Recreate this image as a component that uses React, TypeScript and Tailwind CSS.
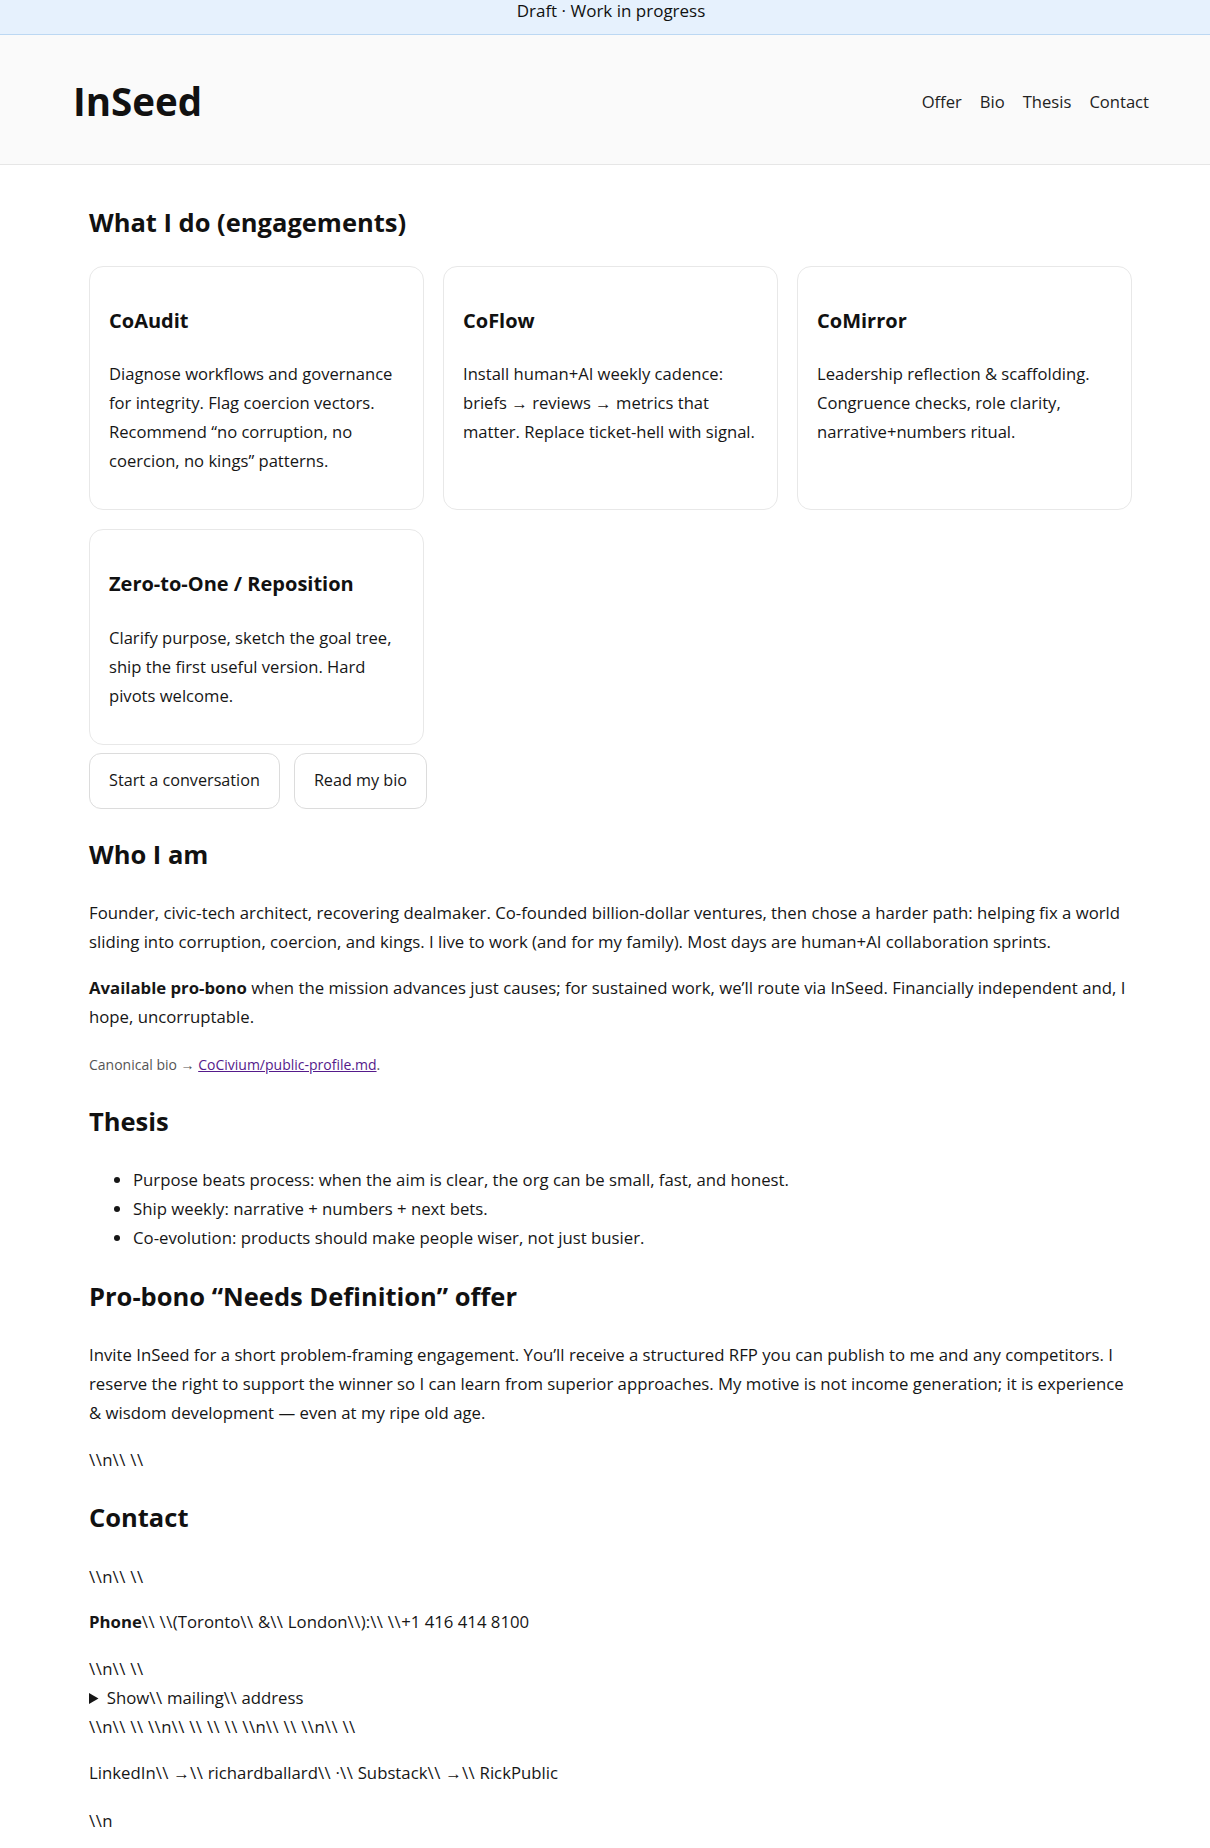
import React from "react";

const BS = "\\\\"; // renders as \\

function Bs({ text }: { text: string }) {
  const out: React.ReactNode[] = [];
  let buf = "";
  let k = 0;
  const flush = () => {
    if (buf) {
      out.push(<React.Fragment key={`t${k++}`}>{buf}</React.Fragment>);
      buf = "";
    }
  };
  for (const ch of text) {
    if (ch === "\\") {
      flush();
      out.push(
        <span key={`b${k++}`} className="tracking-[0.5px]">
          {"\\"}
        </span>
      );
    } else {
      buf += ch;
    }
  }
  flush();
  return <>{out}</>;
}

const cards = [
  {
    title: "CoAudit",
    text: "Diagnose workflows and governance for integrity. Flag coercion vectors. Recommend “no corruption, no coercion, no kings” patterns.",
  },
  {
    title: "CoFlow",
    text: "Install human+AI weekly cadence: briefs → reviews → metrics that matter. Replace ticket-hell with signal.",
  },
  {
    title: "CoMirror",
    text: "Leadership reflection & scaffolding. Congruence checks, role clarity, narrative+numbers ritual.",
  },
  {
    title: "Zero-to-One / Reposition",
    text: "Clarify purpose, sketch the goal tree, ship the first useful version. Hard pivots welcome.",
  },
];

function H2({ children, className = "" }: { children: React.ReactNode; className?: string }) {
  return (
    <h2 className={`text-[25.5px] font-bold leading-[32px] text-[#111] ${className}`}>{children}</h2>
  );
}

export default function App() {
  const nl = `${BS}n${BS} ${BS}`;
  return (
    <div className="min-h-[1848px] bg-white font-['Open_Sans',sans-serif] text-[16.75px] leading-[29px] text-[#161616]">
      <div className="h-[35px] border-b border-[#bcd8f3] bg-[#e6f1fd] pl-[12px] text-center text-[17px] font-medium leading-[22px] text-[#111]">
        Draft · Work in progress
      </div>

      <header className="flex h-[130px] items-center justify-between border-b border-[#e6e6e6] bg-[#fafafa] pl-[73px] pr-[61px] pt-[3px]">
        <div className="text-[38.5px] font-bold leading-none text-[#111]">InSeed</div>
        <nav className="flex gap-[18px] text-[16.6px] text-[#222]">
          <a href="#offer">Offer</a>
          <a href="#bio">Bio</a>
          <a href="#thesis">Thesis</a>
          <a href="#contact">Contact</a>
        </nav>
      </header>

      <main className="pb-[20px] pl-[89px] pr-[78px] pt-[40.5px]">
        <section id="offer">
          <H2>What I do (engagements)</H2>
          <div className="mt-[28px] grid grid-cols-3 gap-[19px]">
            {cards.map((c) => (
              <div key={c.title} className="rounded-[14px] border border-[#e8e8e8] bg-white px-[19px] pb-[34px] pt-[39px]">
                <h3 className="text-[20px] font-bold leading-[30px] text-[#111]">{c.title}</h3>
                <p className="mt-[23.5px] text-[16.6px] leading-[29px]">{c.text}</p>
              </div>
            ))}
          </div>
          <div className="mt-[8px] flex gap-[14px]">
            <a href="#contact" className="flex h-[56px] items-center rounded-[12px] border border-[#dcdcdc] bg-white px-[19px] text-[16.2px]">
              Start a conversation
            </a>
            <a href="#bio" className="flex h-[56px] items-center rounded-[12px] border border-[#dcdcdc] bg-white px-[19px] text-[16.2px]">
              Read my bio
            </a>
          </div>
        </section>

        <section id="bio">
          <H2 className="mt-[29px]">Who I am</H2>
          <p className="mt-[28px]">
            Founder, civic-tech architect, recovering dealmaker. Co-founded billion-dollar ventures, then chose a harder path: helping fix a world sliding into corruption, coercion, and kings. I live to work (and for my family). Most days are human+AI collaboration sprints.
          </p>
          <p className="mt-[17px]">
            <strong className="font-bold">Available pro-bono</strong> when the mission advances just causes; for sustained work, we’ll route via InSeed. Financially independent and, I hope, uncorruptable.
          </p>
          <p className="mt-[23.5px] text-[14px] leading-[22px] text-[#555]">
            Canonical bio →{" "}
            <a href="#" className="text-[#551a8b] underline">
              CoCivium/public-profile.md
            </a>
            .
          </p>
        </section>

        <section id="thesis">
          <H2 className="mt-[29px]">Thesis</H2>
          <ul className="mt-[27.5px] list-disc pl-[44px]">
            <li>Purpose beats process: when the aim is clear, the org can be small, fast, and honest.</li>
            <li>Ship weekly: narrative + numbers + next bets.</li>
            <li>Co-evolution: products should make people wiser, not just busier.</li>
          </ul>
        </section>

        <section>
          <H2 className="mt-[28.5px]">Pro-bono “Needs Definition” offer</H2>
          <p className="mt-[27.5px]">
            Invite InSeed for a short problem-framing engagement. You’ll receive a structured RFP you can publish to me and any competitors. I reserve the right to support the winner so I can learn from superior approaches. My motive is not income generation; it is experience &amp; wisdom development — even at my ripe old age.
          </p>
          <p className="mt-[18px]">
            <Bs text={nl} />
          </p>
        </section>

        <section id="contact">
          <H2 className="mt-[27px]">Contact</H2>
          <p className="mt-[29px]">
            <Bs text={nl} />
          </p>
          <p className="mt-[16.5px]">
            <strong className="font-bold">Phone</strong>
            <Bs text={`${BS} ${BS}(Toronto${BS} &${BS} London${BS}):${BS} ${BS}+1 416 414 8100`} />
          </p>
          <div className="mt-[17.5px]">
            <div>
              <Bs text={nl} />
            </div>
            <details>
              <summary className="cursor-pointer">
                <Bs text={`Show${BS} mailing${BS} address`} />
              </summary>
            </details>
            <div>
              <Bs text={`${BS}n${BS} ${BS} ${BS}n${BS} ${BS} ${BS} ${BS} ${BS}n${BS} ${BS} ${BS}n${BS} ${BS}`} />
            </div>
          </div>
          <p className="mt-[17.5px]">
            <Bs text={`LinkedIn${BS} →${BS} richardballard${BS} ·${BS} Substack${BS} →${BS} RickPublic`} />
          </p>
          <p className="mt-[18.5px]">
            <Bs text={`${BS}n`} />
          </p>
        </section>
      </main>
    </div>
  );
}
